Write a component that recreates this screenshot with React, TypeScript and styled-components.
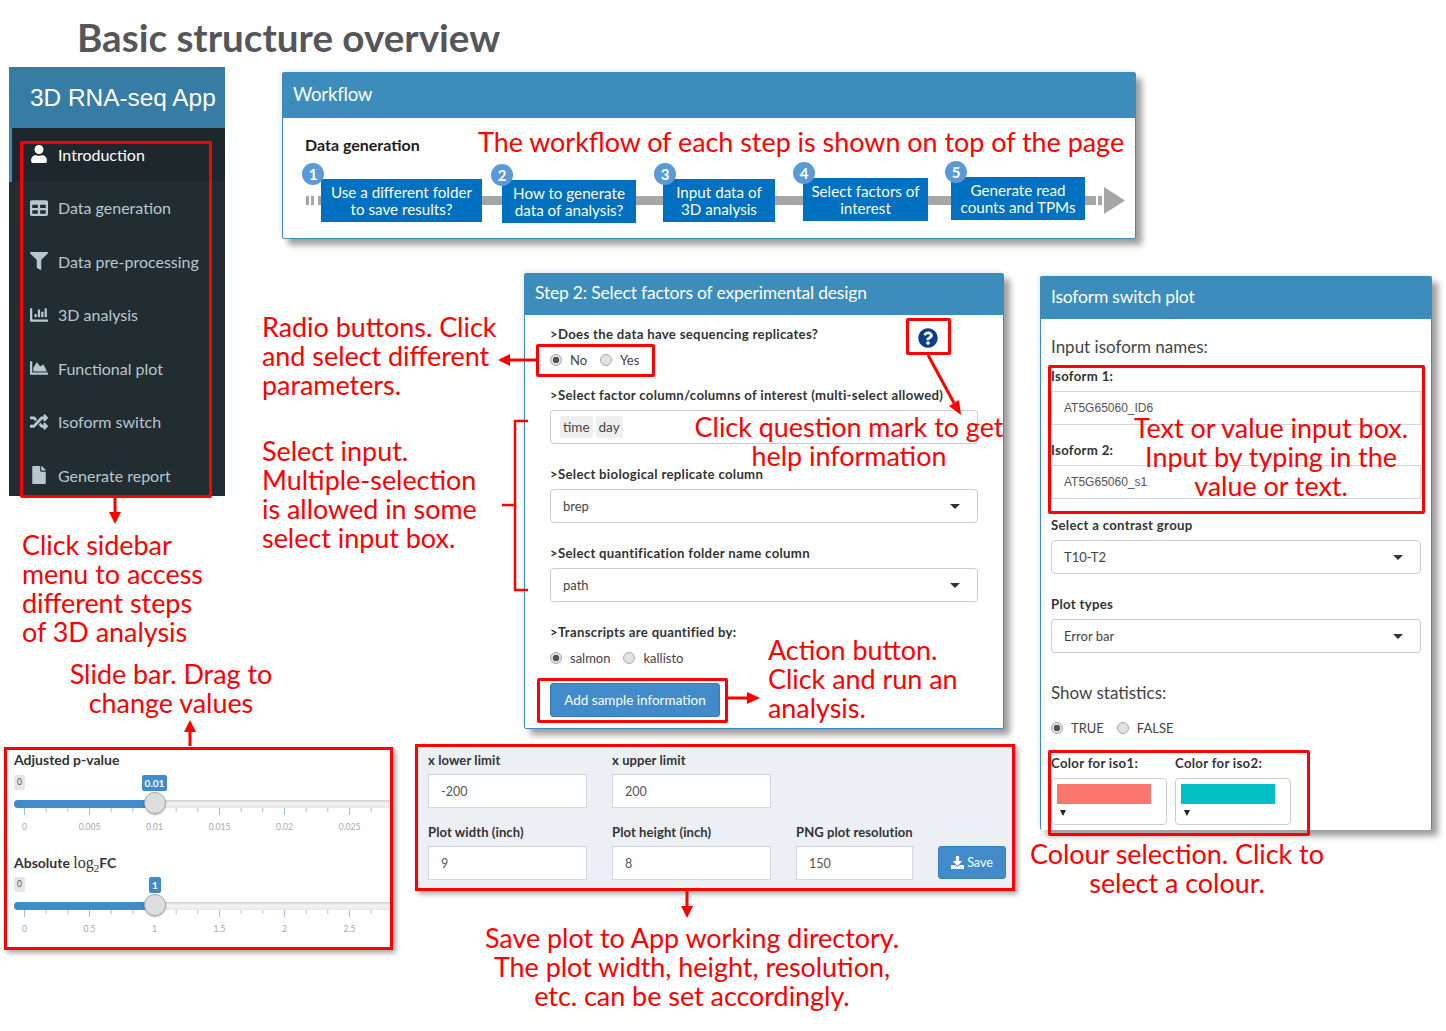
import React from 'react';
import styled, { createGlobalStyle } from 'styled-components';
import { FaChartArea, FaChartBar, FaDownload, FaFile, FaFilter, FaQuestionCircle, FaRandom, FaTable, FaUser } from 'react-icons/fa';

const UI_FONT = `Lato, "Noto Sans", sans-serif`;
const RED = '#ff0000';

const GlobalStyle = createGlobalStyle`
  html, body { margin: 0; padding: 0; background: #fff; }
  body { font-family: ${UI_FONT}; color: #333; }
`;

const Canvas = styled.div`
  position: relative;
  width: 1446px;
  height: 1031px;
  overflow: hidden;
  background: #fff;
`;

const Title = styled.h1`
  position: absolute;
  left: 77px;
  top: 14px;
  margin: 0;
  font: 700 38.6px/46px Lato, sans-serif;
  color: #55565a;
  white-space: nowrap;
`;

const Sidebar = styled.nav`
  position: absolute;
  left: 9px;
  top: 67px;
  width: 216px;
  height: 429px;
  overflow: hidden;
  background: #222d32;
`;

const Logo = styled.div`
  height: 61px;
  padding-left: 21px;
  display: flex;
  align-items: center;
  background: #367ca5;
  color: #fff;
  font: 400 24.4px "Liberation Sans", Arial, sans-serif;
  white-space: nowrap;
`;

const MenuItem = styled.div<{ $active?: boolean }>`
  height: 53.5px;
  box-sizing: border-box;
  display: flex;
  align-items: center;
  gap: 10px;
  padding: 0 0 1px 18px;
  border-left: 3px solid ${p => (p.$active ? '#3c8dbc' : 'transparent')};
  background: ${p => (p.$active ? '#1e282c' : 'transparent')};
  color: ${p => (p.$active ? '#fff' : '#b8c7ce')};
  font-size: 16px;
  white-space: nowrap;
  svg { width: 18px; height: 18px; flex: none; }
`;

const Panel = styled.section<{ $x: number; $y: number; $w: number; $h: number; $open?: boolean }>`
  position: absolute;
  left: ${p => p.$x}px;
  top: ${p => p.$y}px;
  width: ${p => p.$w}px;
  height: ${p => p.$h}px;
  box-sizing: border-box;
  background: #fff;
  border: 1px solid #3c8dbc;
  ${p => (p.$open ? 'border-bottom: none;' : '')}
  border-radius: 2px;
  box-shadow: 6px 6px 6px rgba(0, 0, 0, 0.38), -2px -2px 4px rgba(0, 0, 0, 0.08);
`;

const PanelHeader = styled.header<{ $h: number; $size?: number }>`
  height: ${p => p.$h}px;
  box-sizing: border-box;
  padding: 0 0 4px 10px;
  display: flex;
  align-items: center;
  background: #3c8dbc;
  color: #fff;
  font-size: ${p => p.$size ?? 17.5}px;
  letter-spacing: -0.2px;
  white-space: nowrap;
`;

const PanelBody = styled.div<{ $pad: string }>`
  padding: ${p => p.$pad};
`;

const FlowHeading = styled.div`
  margin: 16px 0 0 22px;
  height: 22px;
  font: 700 16px/22px Lato, sans-serif;
  color: #1c1c1c;
`;

const Flow = styled.div`
  position: relative;
  height: 50px;
  margin-top: 23px;
  display: flex;
  align-items: flex-start;
`;

const FlowRail = styled.svg`
  position: absolute;
  left: 23px;
  top: 8px;
  width: 819px;
  height: 27px;
`;

const FlowStep = styled.div<{ $gap: number; $w: number; $top: number }>`
  position: relative;
  flex: none;
  box-sizing: border-box;
  margin-left: ${p => p.$gap}px;
  margin-top: ${p => p.$top}px;
  width: ${p => p.$w}px;
  height: 43px;
  display: flex;
  align-items: center;
  justify-content: center;
  text-align: center;
  background: #0070c0;
  color: #fff;
  font-size: 15.2px;
  line-height: 17px;
  white-space: pre-line;
`;

const StepBadge = styled.span<{ $x: number }>`
  position: absolute;
  left: ${p => p.$x}px;
  top: -16px;
  width: 22px;
  height: 22px;
  display: flex;
  align-items: center;
  justify-content: center;
  border-radius: 50%;
  background: #5b9bd5;
  color: #fff;
  font: 700 15px Lato, sans-serif;
`;

const Label = styled.div<{ $after?: number }>`
  height: 16px;
  margin-bottom: ${p => p.$after ?? 7}px;
  font-weight: 700;
  font-size: 13.2px;
  letter-spacing: 0.3px;
  line-height: 16px;
  color: #333;
  white-space: nowrap;
`;

const SectionTitle = styled.div<{ $after: number }>`
  height: 20px;
  margin-bottom: ${p => p.$after}px;
  font-size: 17px;
  line-height: 20px;
  color: #444;
`;

const RadioRow = styled.div<{ $after: number }>`
  height: 20px;
  margin-bottom: ${p => p.$after}px;
  display: flex;
  align-items: center;
  gap: 13px;
  font-size: 13px;
  color: #444;
`;

const RadioOption = styled.span`
  display: flex;
  align-items: center;
  gap: 8px;
`;

const RadioDot = styled.span<{ $on?: boolean }>`
  width: 12px;
  height: 12px;
  box-sizing: border-box;
  border-radius: 50%;
  border: 1px solid #aaa;
  background: ${p => (p.$on ? 'radial-gradient(circle, #555 0 3px, #ddd 3.5px)' : '#e2e2e2')};
`;

const Control = styled.div<{ $after?: number }>`
  height: 34px;
  box-sizing: border-box;
  margin-bottom: ${p => p.$after ?? 22}px;
  padding: 0 12px;
  display: flex;
  align-items: center;
  justify-content: space-between;
  background: #fff;
  border: 1px solid #ccc;
  border-radius: 4px;
  font-size: 13px;
  color: #444;
`;

const Caret = styled.span`
  width: 0;
  height: 0;
  margin-right: 5px;
  border-left: 5px solid transparent;
  border-right: 5px solid transparent;
  border-top: 5px solid #333;
`;

const Tags = styled.span`
  display: flex;
  gap: 3px;
  margin-left: -3px;
`;

const Tag = styled.span`
  padding: 3px;
  background: #efefef;
  border-radius: 2px;
  font-size: 13.5px;
  line-height: 16px;
`;

const TextBox = styled.div<{ $after?: number }>`
  height: 34px;
  box-sizing: border-box;
  margin-bottom: ${p => p.$after ?? 0}px;
  padding-left: 12px;
  display: flex;
  align-items: center;
  background: #fff;
  border: 1px solid #d2d6de;
  font: 400 12px "Liberation Sans", Arial, sans-serif;
  color: #555;
`;

const NumberBox = styled(TextBox)`
  font: 400 12.5px Lato, sans-serif;
`;

const ActionButton = styled.button`
  width: 170px;
  height: 34px;
  padding: 0;
  background: #428bca;
  border: 1px solid #357ebd;
  border-radius: 3px;
  color: #fff;
  font: 400 13.5px Lato, sans-serif;
`;

const ColorRow = styled.div`
  display: grid;
  grid-template-columns: 116px 116px;
  column-gap: 8px;
`;

const ColorPicker = styled.div`
  height: 47px;
  box-sizing: border-box;
  padding: 5px;
  background: #fff;
  border: 1px solid #ccc;
  border-radius: 4px;
`;

const Swatch = styled.div<{ $color: string }>`
  width: 94px;
  height: 20px;
  background: ${p => p.$color};
`;

const SmallCaret = styled.div`
  width: 0;
  height: 0;
  margin: 6px 0 0 3px;
  border-left: 3.5px solid transparent;
  border-right: 3.5px solid transparent;
  border-top: 6px solid #222;
`;

const SliderPanel = styled.section`
  position: absolute;
  left: 4px;
  top: 747px;
  width: 389px;
  height: 203px;
  box-sizing: border-box;
  padding: 2px 0 0 7px;
  overflow: hidden;
  background: #fff;
  border: 3px solid ${RED};
  box-shadow: 3px 3px 5px rgba(0, 0, 0, 0.35);
`;

const SliderBlock = styled.div`
  height: 102px;
`;

const SliderLabel = styled.div`
  height: 16px;
  font-weight: 700;
  font-size: 14px;
  line-height: 16px;
  color: #333;
  white-space: nowrap;
`;

const MathLog = styled.span`
  font: 400 16px "Liberation Serif", serif;
  sub { font-size: 11px; line-height: 0; }
`;

const SliderArea = styled.div`
  position: relative;
  margin-top: 7px;
  width: 380px;
`;

const MinBadge = styled.span`
  display: block;
  width: 11px;
  height: 15px;
  background: #e6e6e6;
  border-radius: 2px;
  color: #555;
  font-size: 8.5px;
  line-height: 15px;
  text-align: center;
`;

const ValueBadge = styled.span<{ $x: number; $w: number }>`
  position: absolute;
  left: ${p => p.$x}px;
  top: 0;
  width: ${p => p.$w}px;
  height: 16px;
  background: #428bca;
  border-radius: 2px;
  color: #fff;
  font-size: 10px;
  font-weight: 700;
  line-height: 16px;
  text-align: center;
`;

const Track = styled.div`
  position: relative;
  height: 8px;
  margin-top: 10px;
  border-radius: 4px 0 0 4px;
  background: linear-gradient(#cfcfcf, #f3f3f3 40%, #e8e8e8);
`;

const TrackFill = styled.div`
  position: absolute;
  inset: 0 auto 0 0;
  width: 132px;
  border-radius: 4px 0 0 4px;
  background: #428bca;
`;

const Handle = styled.div`
  position: absolute;
  left: 130px;
  top: -8px;
  width: 22px;
  height: 22px;
  box-sizing: border-box;
  border-radius: 50%;
  background: #dedede;
  border: 1px solid #ababab;
  box-shadow: 0 1px 2px rgba(0, 0, 0, 0.25);
`;

const TickMarks = styled.svg`
  display: block;
  width: 380px;
  height: 9px;
`;

const TickLabels = styled.div`
  display: flex;
  margin: 5px 0 0 -22px;
`;

const TickLabel = styled.span`
  width: 65px;
  text-align: center;
  font-size: 8.5px;
  line-height: 10px;
  color: #a8a8a8;
`;

const SavePanel = styled.section`
  position: absolute;
  left: 415px;
  top: 744px;
  width: 600px;
  height: 147px;
  box-sizing: border-box;
  padding: 5px 10px 0;
  display: grid;
  grid-template-columns: 159px 159px 117px 68px;
  grid-auto-rows: 55px;
  gap: 17px 25px;
  background: #ecf0f5;
  border: 3px solid ${RED};
  box-shadow: 3px 3px 5px rgba(0, 0, 0, 0.35);
`;

const SaveField = styled.div<{ $newRow?: boolean }>`
  grid-column: ${p => (p.$newRow ? 1 : 'auto')};
`;

const SaveLabel = styled.div`
  height: 16px;
  margin-bottom: 6px;
  font-weight: 700;
  font-size: 13px;
  letter-spacing: 0.1px;
  line-height: 16px;
  color: #333;
  white-space: nowrap;
`;

const SaveButton = styled.button`
  align-self: end;
  height: 33px;
  padding: 0;
  display: flex;
  align-items: center;
  justify-content: center;
  gap: 3px;
  background: #428bca;
  border: 1px solid #357ebd;
  border-radius: 3px;
  color: #fff;
  font: 400 12.5px Lato, sans-serif;
  svg { width: 13px; height: 13px; }
`;

const HelpIcon = styled(FaQuestionCircle)`
  position: absolute;
  left: 918px;
  top: 328px;
  width: 20px;
  height: 20px;
  color: #0b3f8c;
`;

const Callout = styled.div<{ $x: number; $y: number; $w: number; $h: number }>`
  position: absolute;
  left: ${p => p.$x}px;
  top: ${p => p.$y}px;
  width: ${p => p.$w}px;
  height: ${p => p.$h}px;
  box-sizing: border-box;
  border: 3px solid ${RED};
  border-radius: 2px;
`;

const Note = styled.div<{ $x: number; $y: number; $w?: number; $center?: boolean }>`
  position: absolute;
  left: ${p => p.$x}px;
  top: ${p => p.$y}px;
  ${p => (p.$w ? `width: ${p.$w}px;` : '')}
  text-align: ${p => (p.$center ? 'center' : 'left')};
  font: 400 26.9px/29px Lato, sans-serif;
  color: ${RED};
  white-space: pre;
`;

const Connectors = styled.svg`
  position: absolute;
  inset: 0;
  width: 1446px;
  height: 1031px;
  pointer-events: none;
`;

const menu = [
  { label: 'Introduction', icon: <FaUser />, active: true },
  { label: 'Data generation', icon: <FaTable /> },
  { label: 'Data pre-processing', icon: <FaFilter /> },
  { label: '3D analysis', icon: <FaChartBar /> },
  { label: 'Functional plot', icon: <FaChartArea /> },
  { label: 'Isoform switch', icon: <FaRandom /> },
  { label: 'Generate report', icon: <FaFile /> },
];

const steps = [
  { n: 1, text: 'Use a different folder\nto save results?', w: 161, gap: 38, top: 0, badge: -19 },
  { n: 2, text: 'How to generate\ndata of analysis?', w: 134, gap: 20, top: 1, badge: -11 },
  { n: 3, text: 'Input data of\n3D analysis', w: 112, gap: 27, top: 0, badge: -9 },
  { n: 4, text: 'Select factors of\ninterest', w: 125, gap: 28, top: -1, badge: -10 },
  { n: 5, text: 'Generate read\ncounts and TPMs', w: 134, gap: 23, top: -2, badge: -6 },
];

const Slider: React.FC<{
  label: React.ReactNode;
  value: string;
  badgeX: number;
  badgeW: number;
  ticks: string[];
}> = ({ label, value, badgeX, badgeW, ticks }) => (
  <SliderBlock>
    <SliderLabel>{label}</SliderLabel>
    <SliderArea>
      <MinBadge>0</MinBadge>
      <ValueBadge $x={badgeX} $w={badgeW}>{value}</ValueBadge>
      <Track>
        <TrackFill />
        <Handle />
      </Track>
      <TickMarks viewBox="0 0 380 9">
        {Array.from({ length: 18 }, (_, i) => {
          const x = 10.5 + (i * 65) / 3;
          const major = i % 3 === 0;
          return <line key={i} x1={x} x2={x} y1={0} y2={major ? 7 : 4} stroke={major ? '#9cc0e4' : '#bbb'} strokeWidth={1} />;
        })}
      </TickMarks>
      <TickLabels>
        {ticks.map(t => <TickLabel key={t}>{t}</TickLabel>)}
      </TickLabels>
    </SliderArea>
  </SliderBlock>
);

const App: React.FC = () => (
  <Canvas>
    <GlobalStyle />
    <Title>Basic structure overview</Title>

    <Sidebar>
      <Logo>3D RNA-seq App</Logo>
      {menu.map(m => (
        <MenuItem key={m.label} $active={m.active}>
          {m.icon}
          {m.label}
        </MenuItem>
      ))}
    </Sidebar>

    <Panel $x={282} $y={72} $w={854} $h={167}>
      <PanelHeader $h={45} $size={18.6}>Workflow</PanelHeader>
      <FlowHeading>Data generation</FlowHeading>
      <Flow>
        <FlowRail viewBox="0 0 819 27">
          <g fill="#a6a6a6">
            <rect x={0} y={9} width={3} height={9} />
            <rect x={5} y={9} width={3} height={9} />
            <rect x={12} y={9} width={770} height={9} />
            <rect x={782} y={9} width={8} height={9} />
            <rect x={792} y={9} width={4} height={9} />
            <polygon points="798,0 819,13.5 798,27" />
          </g>
        </FlowRail>
        {steps.map(s => (
          <FlowStep key={s.n} $gap={s.gap} $w={s.w} $top={s.top}>
            <StepBadge $x={s.badge}>{s.n}</StepBadge>
            {s.text}
          </FlowStep>
        ))}
      </Flow>
    </Panel>

    <Panel $x={524} $y={273} $w={480} $h={456}>
      <PanelHeader $h={41}>Step 2: Select factors of experimental design</PanelHeader>
      <PanelBody $pad="11px 25px 0">
        <Label $after={8}>&gt;Does the data have sequencing replicates?</Label>
        <RadioRow $after={17}>
          <RadioOption><RadioDot $on />No</RadioOption>
          <RadioOption><RadioDot />Yes</RadioOption>
        </RadioRow>
        <Label>&gt;Select factor column/columns of interest (multi-select allowed)</Label>
        <Control>
          <Tags><Tag>time</Tag><Tag>day</Tag></Tags>
        </Control>
        <Label>&gt;Select biological replicate column</Label>
        <Control>brep<Caret /></Control>
        <Label>&gt;Select quantification folder name column</Label>
        <Control>path<Caret /></Control>
        <Label $after={8}>&gt;Transcripts are quantified by:</Label>
        <RadioRow $after={15}>
          <RadioOption><RadioDot $on />salmon</RadioOption>
          <RadioOption><RadioDot />kallisto</RadioOption>
        </RadioRow>
        <ActionButton>Add sample information</ActionButton>
      </PanelBody>
    </Panel>

    <Panel $x={1040} $y={276} $w={392} $h={554} $open>
      <PanelHeader $h={42}>Isoform switch plot</PanelHeader>
      <PanelBody $pad="18px 10px 0">
        <SectionTitle $after={11}>Input isoform names:</SectionTitle>
        <Label>Isoform 1:</Label>
        <TextBox $after={17}>AT5G65060_ID6</TextBox>
        <Label>Isoform 2:</Label>
        <TextBox $after={18}>AT5G65060_s1</TextBox>
        <Label>Select a contrast group</Label>
        <Control>T10-T2<Caret /></Control>
        <Label>Plot types</Label>
        <Control $after={30}>Error bar<Caret /></Control>
        <SectionTitle $after={15}>Show statistics:</SectionTitle>
        <RadioRow $after={17}>
          <RadioOption><RadioDot $on />TRUE</RadioOption>
          <RadioOption><RadioDot />FALSE</RadioOption>
        </RadioRow>
        <ColorRow>
          <Label>Color for iso1:</Label>
          <Label>Color for iso2:</Label>
          <ColorPicker><Swatch $color="#fb766d" /><SmallCaret /></ColorPicker>
          <ColorPicker><Swatch $color="#00bfc4" /><SmallCaret /></ColorPicker>
        </ColorRow>
      </PanelBody>
    </Panel>

    <SliderPanel>
      <Slider
        label="Adjusted p-value"
        value="0.01"
        badgeX={128}
        badgeW={25}
        ticks={['0', '0.005', '0.01', '0.015', '0.02', '0.025']}
      />
      <Slider
        label={<>Absolute <MathLog>log<sub>2</sub></MathLog>FC</>}
        value="1"
        badgeX={135}
        badgeW={12}
        ticks={['0', '0.5', '1', '1.5', '2', '2.5']}
      />
    </SliderPanel>

    <SavePanel>
      <SaveField><SaveLabel>x lower limit</SaveLabel><NumberBox>-200</NumberBox></SaveField>
      <SaveField><SaveLabel>x upper limit</SaveLabel><NumberBox>200</NumberBox></SaveField>
      <SaveField $newRow><SaveLabel>Plot width (inch)</SaveLabel><NumberBox>9</NumberBox></SaveField>
      <SaveField><SaveLabel>Plot height (inch)</SaveLabel><NumberBox>8</NumberBox></SaveField>
      <SaveField><SaveLabel>PNG plot resolution</SaveLabel><NumberBox>150</NumberBox></SaveField>
      <SaveButton><FaDownload />Save</SaveButton>
    </SavePanel>

    <HelpIcon />

    {/* red annotation layer */}
    <Callout $x={20} $y={141} $w={192} $h={357} />
    <Callout $x={536} $y={344} $w={119} $h={33} />
    <Callout $x={906} $y={318} $w={45} $h={37} />
    <Callout $x={537} $y={678} $w={191} $h={45} />
    <Callout $x={1048} $y={365} $w={377} $h={149} />
    <Callout $x={1048} $y={750} $w={262} $h={86} />

    <Connectors viewBox="0 0 1446 1031">
      <g stroke={RED} strokeWidth={3} fill="none">
        <path d="M115 498V514" />
        <path d="M190 746V730" />
        <path d="M687 891V908" />
        <path d="M536 360H508" />
        <path d="M928 355L954 403" />
        <path d="M728 698H749" />
        <path d="M528 421H515V590H528" strokeWidth={2.5} />
        <path d="M502 505H515" strokeWidth={2.5} />
      </g>
      <g fill={RED}>
        <polygon points="109,512 121,512 115,524" />
        <polygon points="184,732 196,732 190,720" />
        <polygon points="681,906 693,906 687,918" />
        <polygon points="510,354 510,366 498,360" />
        <polygon points="949,406 959,400 961,415" />
        <polygon points="747,692 747,704 760,698" />
      </g>
    </Connectors>

    <Note $x={478} $y={127}>The workflow of each step is shown on top of the page</Note>
    <Note $x={262} $y={312}>{'Radio buttons. Click\nand select different\nparameters.'}</Note>
    <Note $x={262} $y={436}>{'Select input.\nMultiple-selection\nis allowed in some\nselect input box.'}</Note>
    <Note $x={22} $y={530}>{'Click sidebar\nmenu to access\ndifferent steps\nof 3D analysis'}</Note>
    <Note $x={21} $y={659} $w={300} $center>{'Slide bar. Drag to\nchange values'}</Note>
    <Note $x={649} $y={412} $w={400} $center>{'Click question mark to get\nhelp information'}</Note>
    <Note $x={1071} $y={413} $w={400} $center>{'Text or value input box.\nInput by typing in the\nvalue or text.'}</Note>
    <Note $x={768} $y={635}>{'Action button.\nClick and run an\nanalysis.'}</Note>
    <Note $x={977} $y={839} $w={400} $center>{'Colour selection. Click to\nselect a colour.'}</Note>
    <Note $x={442} $y={923} $w={500} $center>{'Save plot to App working directory.\nThe plot width, height, resolution,\netc. can be set accordingly.'}</Note>
  </Canvas>
);

export default App;
